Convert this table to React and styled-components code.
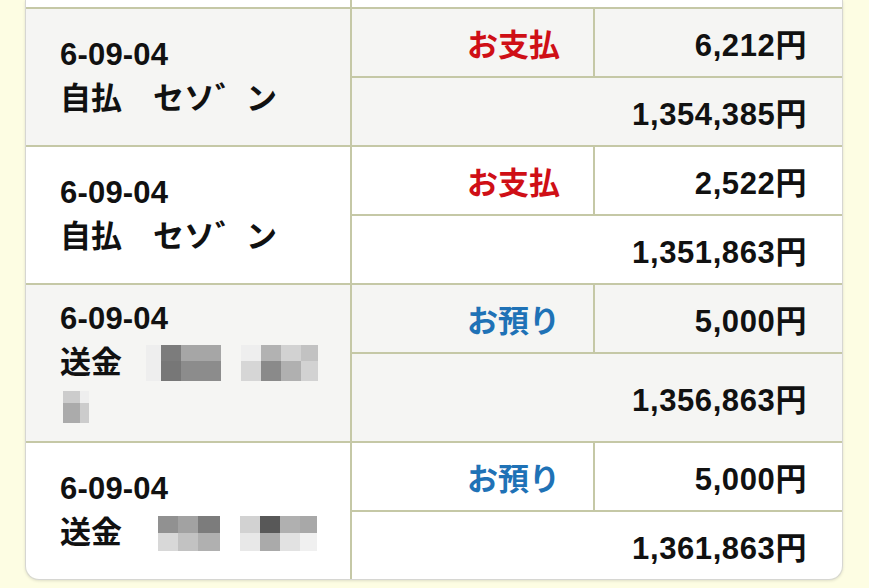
import styled, { createGlobalStyle } from "styled-components";

const GlobalStyle = createGlobalStyle`
  html, body {
    margin: 0;
    padding: 0;
    background: #fdfde3;
  }
  body {
    font-family: "Liberation Sans", "Noto Sans CJK JP", sans-serif;
    color: #111;
  }
`

const Page = styled.div`
  width: 869px;
  height: 588px;
  overflow: hidden;
  padding-left: 25px;
  box-sizing: border-box;
`

const Card = styled.div`
  width: 818px;
  box-sizing: border-box;
  background: #fff;
  border: 1px solid #d6d6d2;
  border-top: none;
  border-radius: 0 0 14px 14px;
  overflow: hidden;
  box-shadow: 0 1px 3px rgba(0, 0, 0, 0.12);
`

const TopStub = styled.div`
  display: grid;
  grid-template-columns: 324px 1fr;
  gap: 2px;
  background: #c5c8a6;
  height: 7px;
  & > div {
    background: #fff;
  }
`

const Record = styled.div`
  display: grid;
  grid-template-columns: 324px 241px 1fr;
  grid-template-rows: 67px minmax(67px, auto);
  gap: 2px;
  padding-top: 2px;
  background: #c5c8a6;
`

const InfoCell = styled.div`
  grid-row: 1 / span 2;
  background: ${(p) => (p.$shade ? "#f5f5f3" : "#fff")};
  padding: 12px 20px 12px 34px;
  display: flex;
  flex-direction: column;
  justify-content: center;
  font-size: 31px;
  font-weight: bold;
  line-height: 44px;
`

const DateLine = styled.div`
  letter-spacing: 0.2px;
`

const NameLine = styled.div`
  display: flex;
  align-items: center;
  min-height: 44px;
  white-space: pre;
`

const TypeCell = styled.div`
  background: ${(p) => (p.$shade ? "#f5f5f3" : "#fff")};
  display: flex;
  align-items: center;
  justify-content: flex-end;
  padding-right: 33px;
  font-size: 31px;
  font-weight: bold;
  color: ${(p) => (p.$kind === "out" ? "#cf0f16" : "#1f72b6")};
`

const AmountCell = styled.div`
  background: ${(p) => (p.$shade ? "#f5f5f3" : "#fff")};
  display: flex;
  align-items: center;
  justify-content: flex-end;
  padding-right: 35px;
  font-size: 31px;
  font-weight: bold;
  letter-spacing: 0.6px;
`

const BalanceCell = styled(AmountCell)`
  grid-column: 2 / span 2;
`

const Mosaic = styled.span`
  display: inline-grid;
  grid-template-columns: ${(p) => p.$cols};
  grid-template-rows: ${(p) => p.$rows};
  margin-left: ${(p) => p.$gap}px;
`

const Tile = styled.span`
  background: ${(p) => p.$c};
`

function Blur({ cols, rows, colors, gap = 0 }) {
  return (
    <Mosaic $cols={cols} $rows={rows} $gap={gap}>
      {colors.map((c, i) => (
        <Tile key={i} $c={c} />
      ))}
    </Mosaic>
  );
}

const records = [
  {
    date: "6-09-04",
    name: [["自払　セソ゛ン"]],
    kind: "out",
    label: "お支払",
    amount: "6,212円",
    balance: "1,354,385円",
  },
  {
    date: "6-09-04",
    name: [["自払　セソ゛ン"]],
    kind: "out",
    label: "お支払",
    amount: "2,522円",
    balance: "1,351,863円",
  },
  {
    date: "6-09-04",
    name: [
      [
        "送金",
        { gap: 24, cols: "15px 20px 20px 20px", rows: "16px 20px", colors: ["#eeeeee", "#7c7c7c", "#a6a6a6", "#a6a6a6", "#eeeeee", "#777777", "#8c8c8c", "#8c8c8c"] },
        { gap: 20, cols: "20px 20px 20px 17px", rows: "16px 20px", colors: ["#eeeeee", "#b2b2b2", "#d2d2d2", "#c2c2c2", "#d6d6d6", "#8a8a8a", "#b0b0b0", "#d2d2d2"] },
      ],
      [
        { gap: 3, cols: "17px 9px", rows: "12px 20px", colors: ["#cccccc", "#eeeeee", "#ababab", "#cccccc"] },
      ],
    ],
    kind: "in",
    label: "お預り",
    amount: "5,000円",
    balance: "1,356,863円",
  },
  {
    date: "6-09-04",
    name: [
      [
        "送金",
        { gap: 36, cols: "20px 20px 22px", rows: "17px 18px", colors: ["#919191", "#a2a2a2", "#7c7c7c", "#d8d8d8", "#c2c2c2", "#b0b0b0"] },
        { gap: 20, cols: "20px 20px 20px 17px", rows: "17px 18px", colors: ["#d2d2d2", "#585858", "#b0b0b0", "#a8a8a8", "#e8e8e8", "#aaaaaa", "#e2e2e2", "#f0f0f0"] },
      ],
    ],
    kind: "in",
    label: "お預り",
    amount: "5,000円",
    balance: "1,361,863円",
  },
];

export default function App() {
  return (
    <Page>
      <GlobalStyle />
      <Card>
        <TopStub>
          <div />
          <div />
        </TopStub>
        {records.map((r, i) => {
          const shade = i % 2 === 0;
          return (
            <Record key={i}>
              <InfoCell $shade={shade}>
                <DateLine>{r.date}</DateLine>
                {r.name.map((line, j) => (
                  <NameLine key={j}>
                    {line.map((part, k) =>
                      typeof part === "string" ? (
                        <span key={k}>{part}</span>
                      ) : (
                        <Blur key={k} {...part} />
                      )
                    )}
                  </NameLine>
                ))}
              </InfoCell>
              <TypeCell $shade={shade} $kind={r.kind}>
                {r.label}
              </TypeCell>
              <AmountCell $shade={shade}>{r.amount}</AmountCell>
              <BalanceCell $shade={shade}>{r.balance}</BalanceCell>
            </Record>
          );
        })}
      </Card>
    </Page>
  );
}
